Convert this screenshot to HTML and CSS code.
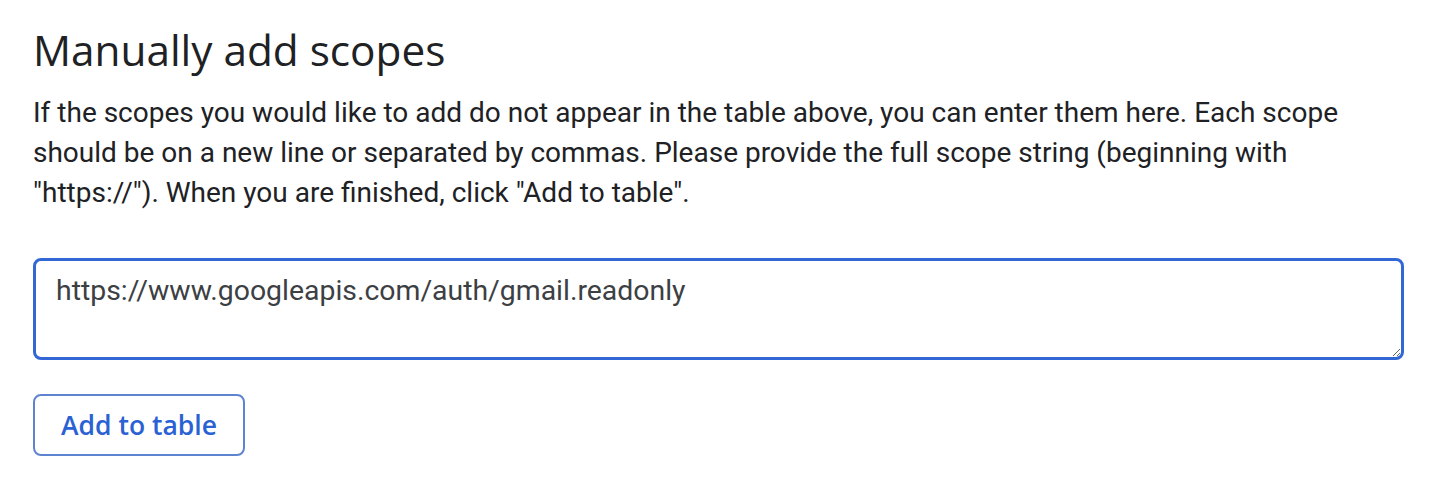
FILE: index.html
```html
<!DOCTYPE html>
<html lang="en">
<head>
<meta charset="UTF-8">
<meta name="viewport" content="width=device-width, initial-scale=1.0">
<title>Manually add scopes</title>
<link rel="stylesheet" href="styles.css">
</head>
<body>
<div class="container">
    <h2>Manually add scopes</h2>
    <p class="help">If the scopes you would like to add do not appear in the table above, you can enter them here. Each scope should be on a new line or separated by commas. Please provide the full scope string (beginning with "https://"). When you are finished, click "Add to table".</p>
    <textarea class="scopes-input" spellcheck="false">https://www.googleapis.com/auth/gmail.readonly</textarea>
    <button class="add-btn">Add to table</button>
</div>
</body>
</html>
```

FILE: styles.css
```css
body {
    margin: 0;
    font-family: Roboto, Arial, sans-serif;
    background-color: #ffffff;
    color: #202124;
}
.container {
    padding: 22px 30px 0 33px;
    display: flex;
    flex-direction: column;
    align-items: flex-start;
}
h2 {
    font-family: "Open Sans", Roboto, Arial, sans-serif;
    font-weight: 400;
    font-size: 42.3px;
    line-height: 56px;
    margin: 0 0 15px 0;
    color: #202124;
}
.help {
    font-size: 28px;
    line-height: 40px;
    margin: 0 0 45px 0;
    max-width: 1345px;
}
.scopes-input {
    box-sizing: border-box;
    width: 1371px;
    height: 102px;
    padding: 14px 20px;
    border: 3px solid #3367d6;
    border-radius: 8px;
    font-family: Roboto, Arial, sans-serif;
    font-size: 28.4px;
    line-height: 32px;
    color: #3c4043;
    resize: vertical;
    outline: none;
    margin: 0 0 34px 0;
}
.add-btn {
    box-sizing: border-box;
    height: 62px;
    padding: 0 26px;
    border: 2px solid #5f84cf;
    border-radius: 8px;
    background-color: #ffffff;
    color: #2a62d4;
    font-family: "Open Sans", Roboto, Arial, sans-serif;
    font-weight: 600;
    font-size: 26.5px;
    cursor: pointer;
}
```
